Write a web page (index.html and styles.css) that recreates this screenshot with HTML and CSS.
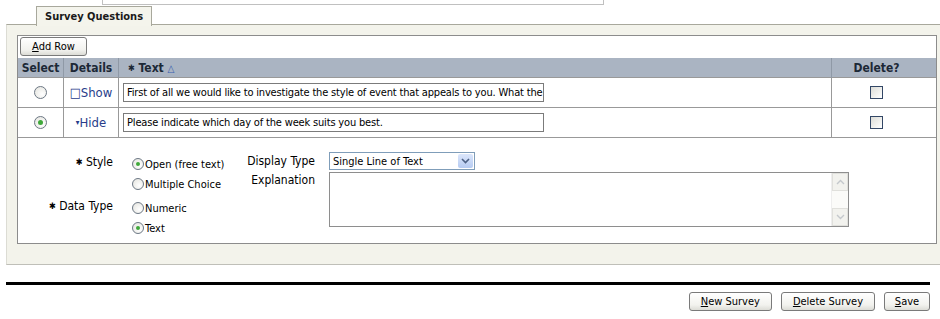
FILE: index.html
```html
<!DOCTYPE html>
<html>
<head>
<title>Survey Questions</title>
<meta charset="UTF-8">
<link rel="stylesheet" href="styles.css">
</head>
<body>
<div class="topbox"></div>
<div class="tabs">
<div class="tab">Survey Questions</div>
</div>
<div class="panel">
<div class="grid">
<div class="toolbar">
<button class="btn"><u>A</u>dd Row</button>
</div>
<table class="qtable">
<tr class="head">
<th class="c-select">Select</th>
<th class="c-details">Details</th>
<th class="c-text"><span class="req">&#10033;</span> Text <span class="sort">&#9651;</span></th>
<th class="c-delete">Delete?</th>
</tr>
<tr>
<td class="c-select"><span class="radio"></span></td>
<td class="c-details"><a class="toggle">&#9633;Show</a></td>
<td class="c-text"><div class="field">First of all we would like to investigate the style of event that appeals to you. What the</div></td>
<td class="c-delete"><span class="check"></span></td>
</tr>
<tr>
<td class="c-select"><span class="radio on"></span></td>
<td class="c-details"><a class="toggle"><span class="tri">&#9662;</span>Hide</a></td>
<td class="c-text"><div class="field">Please indicate which day of the week suits you best.</div></td>
<td class="c-delete"><span class="check"></span></td>
</tr>
<tr>
<td colspan="4" class="detail">
<div class="detail-grid">
<div class="labels">
<div class="lbl lbl-style"><span class="req">&#10033;</span> Style</div>
<div class="lbl lbl-type"><span class="req">&#10033;</span> Data Type</div>
</div>
<div class="options">
<label class="opt"><span class="radio small on"></span>Open (free text)</label>
<label class="opt"><span class="radio small"></span>Multiple Choice</label>
<label class="opt gap"><span class="radio small"></span>Numeric</label>
<label class="opt"><span class="radio small on"></span>Text</label>
</div>
<div class="labels2">
<div class="lbl2">Display Type</div>
<div class="lbl2">Explanation</div>
</div>
<div class="inputs">
<div class="select"><span>Single Line of Text</span><span class="drop"><svg width="9" height="6" viewBox="0 0 9 6"><path d="M1 1l3.5 3.5L8 1" fill="none" stroke="#4d6185" stroke-width="1.6"/></svg></span></div>
<div class="area">
<div class="area-body"></div>
<div class="scroll">
<span class="sbtn"><svg width="9" height="6" viewBox="0 0 9 6"><path d="M1 5l3.5-3.5L8 5" fill="none" stroke="#c4c8cc" stroke-width="1.4"/></svg></span>
<span class="sbtn"><svg width="9" height="6" viewBox="0 0 9 6"><path d="M1 1l3.5 3.5L8 1" fill="none" stroke="#c4c8cc" stroke-width="1.4"/></svg></span>
</div>
</div>
</div>
</div>
</td>
</tr>
</table>
</div>
</div>
<div class="footer">
<button class="btn"><u>N</u>ew Survey</button>
<button class="btn"><u>D</u>elete Survey</button>
<button class="btn btn-save"><u>S</u>ave</button>
</div>
</body>
</html>
```

FILE: styles.css
```css
body {
    margin: 0;
    font-family: "DejaVu Sans", sans-serif;
    font-stretch: condensed;
    font-size: 11px;
    color: #000;
    background: #fff;
}
.topbox {
    margin-left: 102px;
    width: 500px;
    height: 4px;
    border: 1px solid #c0c0c0;
    border-top: none;
}
.tabs {
    display: flex;
    padding-left: 36px;
    margin-top: 1px;
    height: 18px;
}
.tab {
    position: relative;
    z-index: 1;
    height: 19px;
    padding: 0 8px;
    background: #f4f4ec;
    border: 1px solid #a8a89c;
    border-bottom: none;
    font-weight: bold;
    font-size: 11px;
    line-height: 19px;
    color: #1a1a1a;
}
.panel {
    margin-left: 6px;
    background: #f3f3eb;
    border-top: 1px solid #a8a89c;
    border-left: 1px solid #dcdcd4;
    border-bottom: 1px solid #bfbfb8;
    padding: 10px 3px 20px 10px;
}
.grid {
    background: #fff;
    border: 1px solid #8c8c8c;
}
.toolbar {
    padding: 1px 2px 2px;
    height: 19px;
}
.btn {
    font-family: "DejaVu Sans", sans-serif;
    font-stretch: condensed;
    font-size: 11px;
    height: 19px;
    padding: 0 11px;
    background: linear-gradient(#ffffff, #f2f2ee 70%, #dcdcd6);
    border: 1px solid #7a7a7a;
    border-radius: 3px;
    color: #000;
}
.toolbar .btn {
    width: 67px;
    padding: 0;
}
.btn-save {
    width: 46px;
    padding: 0;
}
.qtable {
    width: 100%;
    border-collapse: collapse;
}
.qtable th {
    background: #aab4c2;
    height: 19px;
    padding: 0;
    font-weight: bold;
    font-size: 12px;
    color: #1c2836;
    border-left: 1px solid #8f99a6;
    text-align: center;
}
.qtable th:first-child {
    border-left: none;
}
.qtable th.c-text {
    text-align: left;
    padding-left: 9px;
}
.qtable td {
    height: 29px;
    padding: 0;
    border-top: 1px solid #999;
    border-left: 1px solid #999;
    text-align: center;
}
.qtable td:first-child {
    border-left: none;
}
.c-select { width: 45px; }
.c-details { width: 54px; }
.qtable .c-delete {
    width: 89px;
    padding-right: 15px;
}
.qtable td.c-text {
    text-align: left;
    padding-left: 4px;
}
.req {
    font-size: 9px;
    position: relative;
    top: -1px;
}
.sort {
    color: #3a5fb0;
    font-size: 10px;
    font-weight: normal;
}
.radio {
    display: inline-block;
    width: 11px;
    height: 11px;
    border: 1px solid #6d7885;
    border-radius: 50%;
    background: radial-gradient(circle at 65% 65%, #ffffff, #e2e2dc);
    vertical-align: middle;
    box-sizing: content-box;
    position: relative;
}
.radio.on::after {
    content: "";
    position: absolute;
    left: 3px;
    top: 3px;
    width: 5px;
    height: 5px;
    border-radius: 50%;
    background: #3fa83a;
}
.check {
    display: inline-block;
    width: 11px;
    height: 11px;
    border: 1px solid #334766;
    background: linear-gradient(135deg, #dcdcd6, #ffffff);
    vertical-align: middle;
}
.toggle {
    color: #283c8a;
    font-size: 13px;
    text-decoration: none;
    display: inline-block;
}
.tri {
    font-size: 8px;
    position: relative;
    top: -2px;
}
.field {
    width: 416px;
    height: 17px;
    border: 1px solid #7b7b7b;
    padding-left: 3px;
    line-height: 17px;
    font-size: 11px;
    letter-spacing: -0.17px;
    white-space: nowrap;
    overflow: hidden;
}
.qtable td.detail {
    height: 105px;
    text-align: left;
    vertical-align: top;
}
.detail-grid {
    display: flex;
    padding-top: 16px;
}
.labels {
    width: 95px;
    text-align: right;
    font-size: 12px;
}
.lbl-style {
    margin-top: 1px;
}
.lbl-type {
    margin-top: 30px;
}
.options {
    padding-left: 19px;
    width: 110px;
}
.opt {
    display: flex;
    align-items: center;
    height: 20px;
    gap: 1px;
    font-size: 11px;
}
.opt.gap {
    margin-top: 4px;
}
.radio.small {
    width: 10px;
    height: 10px;
}
.radio.small.on::after {
    left: 3px;
    top: 3px;
    width: 4px;
    height: 4px;
}
.labels2 {
    width: 73px;
    text-align: right;
    font-size: 12px;
}
.lbl2 {
    height: 19px;
}
.inputs {
    padding-left: 14px;
    margin-top: -2px;
}
.select {
    display: flex;
    justify-content: space-between;
    align-items: center;
    border: 1px solid #7f9db9;
    padding-left: 3px;
    font-size: 11px;
    box-sizing: border-box;
    width: 146px;
    height: 18px;
}
.drop {
    display: flex;
    align-items: center;
    justify-content: center;
    width: 15px;
    height: 14px;
    margin-right: 1px;
    background: linear-gradient(#dbe6fb, #b6cbf2);
    border-radius: 2px;
}
.area {
    display: flex;
    width: 520px;
    height: 55px;
    border: 1px solid #8e8e8e;
    margin-top: 2px;
    box-sizing: border-box;
}
.area-body {
    flex: 1;
}
.scroll {
    width: 16px;
    display: flex;
    flex-direction: column;
    justify-content: space-between;
    background: #fbfbf9;
    border-left: 1px solid #eee;
}
.sbtn {
    display: flex;
    align-items: center;
    justify-content: center;
    height: 16px;
    background: #f2f2ee;
    border: 1px solid #e0e0dc;
}
.footer {
    margin: 17px 10px 0 6px;
    border-top: 3px solid #000;
    padding-top: 7px;
    display: flex;
    justify-content: flex-end;
    gap: 9px;
}
```
